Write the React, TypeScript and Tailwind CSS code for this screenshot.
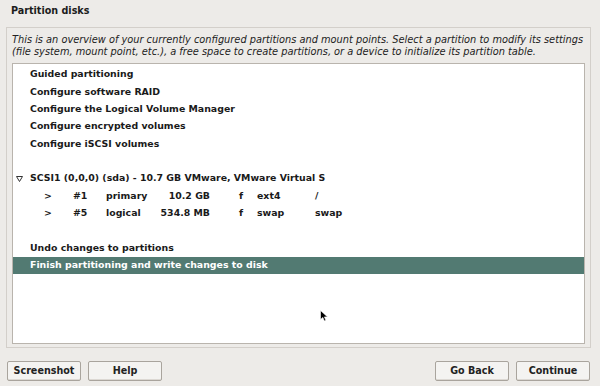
import React from "react";

const font = { fontFamily: '"DejaVu Sans", "Liberation Sans", sans-serif' };

function Row({ children, selected = false }: { children: React.ReactNode; selected?: boolean }) {
  return (
    <div
      className={`h-[17.4px] flex items-center whitespace-nowrap font-bold text-[9.4px] ${
        selected ? "bg-[#527a72] text-white" : "text-[#1a1a1a]"
      }`}
    >
      {children}
    </div>
  );
}

function PartRow({ n, type, size, fs, mount }: { n: string; type: string; size: string; fs: string; mount: string }) {
  return (
    <Row>
      <span className="w-[31px] shrink-0" />
      <span className="w-[29px] shrink-0">&gt;</span>
      <span className="w-[33px] shrink-0">{n}</span>
      <span className="w-[50px] shrink-0">{type}</span>
      <span className="w-[54px] shrink-0 text-right">{size}</span>
      <span className="w-[33px] shrink-0 text-right">f</span>
      <span className="w-[14px] shrink-0" />
      <span className="w-[58px] shrink-0">{fs}</span>
      <span>{mount}</span>
    </Row>
  );
}

function Btn({ label }: { label: string }) {
  return (
    <div className="w-[74px] h-[20px] flex items-center justify-center rounded-[2px] border border-[#a9a49d] bg-[#f4f3f1] text-[9.6px] font-bold text-[#222] shadow-[inset_0_-1px_0_#dcd8d3]">
      {label}
    </div>
  );
}

export default function App() {
  return (
    <div className="w-[600px] h-[386px] bg-[#edebe8] flex flex-col relative overflow-hidden" style={font}>
      <div className="h-[27px] pl-[11px] pt-[4px] text-[9.6px] font-bold text-[#1c1c1c]">Partition disks</div>
      <div className="mx-[6px] w-[585px] h-[321px] border border-[#d3cfca] flex flex-col px-[5px] pt-[6px] pb-[3px]">
        <div className="italic text-[9.8px] leading-[12px] text-[#222] h-[29px] whitespace-nowrap">
          <div>This is an overview of your currently configured partitions and mount points. Select a partition to modify its settings</div>
          <div>(file system, mount point, etc.), a free space to create partitions, or a device to initialize its partition table.</div>
        </div>
        <div className="flex-1 bg-white border border-[#b9b4ad] pt-[1.5px]">
          <Row><span className="pl-[17px]">Guided partitioning</span></Row>
          <Row><span className="pl-[17px]">Configure software RAID</span></Row>
          <Row><span className="pl-[17px]">Configure the Logical Volume Manager</span></Row>
          <Row><span className="pl-[17px]">Configure encrypted volumes</span></Row>
          <Row><span className="pl-[17px]">Configure iSCSI volumes</span></Row>
          <Row><span /></Row>
          <Row>
            <span className="w-[17px] pl-[3px] shrink-0 flex items-center">
              <svg width="7" height="6" viewBox="0 0 7 6">
                <path d="M0.5 0.5 L6.5 0.5 L3.5 5.5 Z" fill="none" stroke="#333" strokeWidth="1" />
              </svg>
            </span>
            <span>SCSI1 (0,0,0) (sda) - 10.7 GB VMware, VMware Virtual S</span>
          </Row>
          <PartRow n="#1" type="primary" size="10.2 GB" fs="ext4" mount="/" />
          <PartRow n="#5" type="logical" size="534.8 MB" fs="swap" mount="swap" />
          <Row><span /></Row>
          <Row><span className="pl-[17px]">Undo changes to partitions</span></Row>
          <Row selected><span className="pl-[17px]">Finish partitioning and write changes to disk</span></Row>
        </div>
      </div>
      <div className="flex items-center justify-between pl-[7px] pr-[10px] pt-[13px]">
        <div className="flex gap-[7px]">
          <Btn label="Screenshot" />
          <Btn label="Help" />
        </div>
        <div className="flex gap-[7px]">
          <Btn label="Go Back" />
          <Btn label="Continue" />
        </div>
      </div>
      <svg className="absolute left-[320px] top-[310px]" width="9" height="12" viewBox="0 0 9 12">
        <path d="M0.5 0.5 L0.5 9.5 L2.8 7.4 L4.4 11 L5.9 10.3 L4.4 6.9 L7.5 6.9 Z" fill="#000" stroke="#fff" strokeWidth="0.6" />
      </svg>
    </div>
  );
}
